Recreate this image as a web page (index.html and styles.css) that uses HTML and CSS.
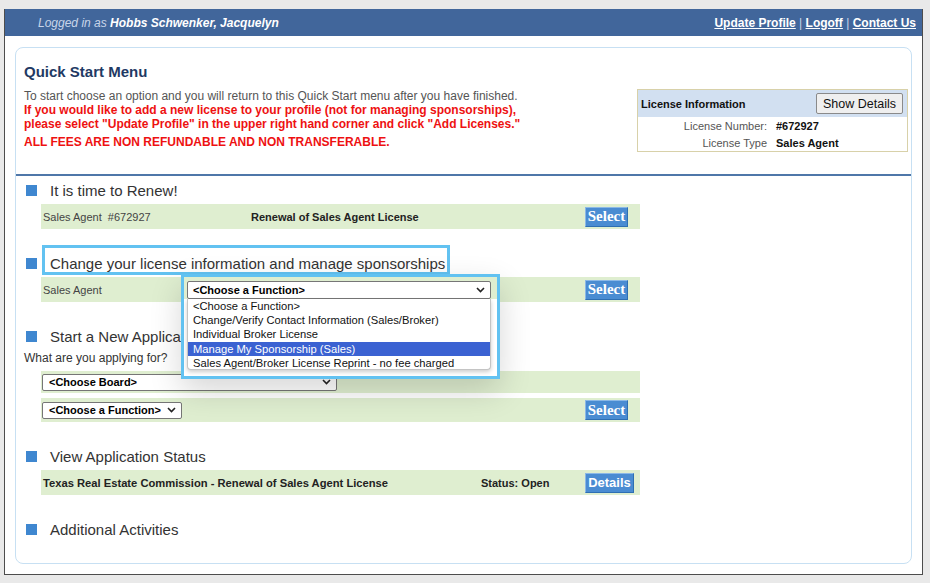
FILE: index.html
```html
<!DOCTYPE html>
<html>
<head>
<meta charset="utf-8">
<link rel="stylesheet" href="styles.css">
</head>
<body>
<div class="frame">
  <div class="topbar">
    <div class="who"><span>Logged in as </span><b>Hobbs Schwenker, Jacquelyn</b></div>
    <div class="links"><a>Update Profile</a> | <a>Logoff</a> | <a>Contact Us</a></div>
  </div>
  <div class="card">
    <div class="qs-head">
      <div class="intro">
        <h1>Quick Start Menu</h1>
        <p class="desc">To start choose an option and you will return to this Quick Start menu after you have finished.<br><span class="red">If you would like to add a new license to your profile (not for managing sponsorships),<br>please select "Update Profile" in the upper right hand corner and click "Add Licenses."</span></p>
        <p class="fees">ALL FEES ARE NON REFUNDABLE AND NON TRANSFERABLE.</p>
      </div>
      <div class="licbox">
        <div class="lic-h"><span>License Information</span><button class="btn-gray">Show Details</button></div>
        <div class="lic-r"><span class="k">License Number:</span><span class="v">#672927</span></div>
        <div class="lic-r"><span class="k">License Type</span><span class="v">Sales Agent</span></div>
      </div>
    </div>

    <div class="sections">
      <div class="sec">
        <div class="sec-t"><span class="sq"></span>It is time to Renew!</div>
        <div class="row">
          <span class="c1 w208">Sales Agent &nbsp;#672927</span>
          <span class="b">Renewal of Sales Agent License</span>
          <span class="act"><button class="btn-blue">Select</button></span>
        </div>
      </div>

      <div class="sec">
        <div class="sec-t"><span class="sq"></span>Change your license information and manage sponsorships</div>
        <div class="row">
          <span class="c1 w144">Sales Agent</span>
          <div class="sel w304"><span>&lt;Choose a Function&gt;</span><svg width="9" height="6" viewBox="0 0 9 6"><path d="M1 1 L4.5 4.5 L8 1" fill="none" stroke="#222" stroke-width="1.6"/></svg></div>
          <span class="act"><button class="btn-blue">Select</button></span>
        </div>
      </div>

      <div class="sec">
        <div class="sec-t"><span class="sq"></span>Start a New Application</div>
        <p class="ask">What are you applying for?</p>
        <div class="row short">
          <div class="sel w295"><span>&lt;Choose Board&gt;</span><svg width="9" height="6" viewBox="0 0 9 6"><path d="M1 1 L4.5 4.5 L8 1" fill="none" stroke="#222" stroke-width="1.6"/></svg></div>
        </div>
        <div class="row mid">
          <div class="sel w140"><span>&lt;Choose a Function&gt;</span><svg width="9" height="6" viewBox="0 0 9 6"><path d="M1 1 L4.5 4.5 L8 1" fill="none" stroke="#222" stroke-width="1.6"/></svg></div>
          <span class="act"><button class="btn-blue">Select</button></span>
        </div>
      </div>

      <div class="sec">
        <div class="sec-t"><span class="sq"></span>View Application Status</div>
        <div class="row">
          <span class="b wide">Texas Real Estate Commission - Renewal of Sales Agent License</span>
          <span class="b status">Status: Open</span>
          <span class="act fixed"><button class="btn-blue sans">Details</button></span>
        </div>
      </div>

      <div class="sec">
        <div class="sec-t"><span class="sq"></span>Additional Activities</div>
      </div>

      <div class="hl-title"></div>
      <div class="hl-dd">
        <div class="dd-panel">
          <div class="dd-list">
            <div class="opt">&lt;Choose a Function&gt;</div>
            <div class="opt">Change/Verify Contact Information (Sales/Broker)</div>
            <div class="opt">Individual Broker License</div>
            <div class="opt on">Manage My Sponsorship (Sales)</div>
            <div class="opt">Sales Agent/Broker License Reprint - no fee charged</div>
          </div>
        </div>
      </div>
    </div>
  </div>
</div>
</body>
</html>
```

FILE: styles.css
```css
body {
  margin: 0;
  background: #e9e9e9;
  font-family: "Liberation Sans", Arial, sans-serif;
}

.frame {
  margin: 9px 0 0 4px;
  width: 917px;
  height: 565px;
  background: #fff;
  border: 1px solid #4d4d4d;
  border-top: 0;
}

.topbar {
  height: 27px;
  background: #41669b;
  display: flex;
  align-items: center;
  justify-content: space-between;
  padding: 0 6px 0 33px;
  font-size: 12px;
}

.who {
  color: #c8d5e9;
  font-style: italic;
}

.who b {
  color: #fff;
}

.links {
  color: #c8d5e9;
}

.links a {
  color: #fff;
  font-weight: bold;
  text-decoration: underline;
}

.card {
  margin: 11px 10px 10px;
  height: 517px;
  box-sizing: border-box;
  border: 1px solid #c7e0f3;
  border-radius: 8px;
}

.qs-head {
  height: 128px;
  box-sizing: border-box;
  border-bottom: 2px solid #4f77a9;
  display: flex;
  justify-content: space-between;
  padding: 15px 3px 0 8px;
}

h1 {
  margin: 0;
  font-size: 15px;
  line-height: 18px;
  color: #1f3a64;
}

.desc {
  margin: 8px 0 0;
  font-size: 12px;
  line-height: 14px;
  color: #555;
}

.red {
  color: #ee1111;
  font-weight: bold;
}

.fees {
  margin: 4px 0 0;
  font-size: 12px;
  line-height: 14px;
  color: #ee1111;
  font-weight: bold;
}

.licbox {
  margin-top: 26px;
  width: 271px;
  height: 63px;
  box-sizing: border-box;
  border: 1px solid #d8d1a9;
  font-size: 11px;
}

.lic-h {
  height: 27px;
  background: #d2e0f1;
  display: flex;
  align-items: center;
  justify-content: space-between;
  padding: 0 4px 0 3px;
  font-weight: bold;
  color: #111;
}

.btn-gray {
  height: 21px;
  width: 87px;
  padding: 0;
  font-family: "Liberation Sans", Arial, sans-serif;
  font-size: 12.5px;
  color: #111;
  background: #efefef;
  border: 1px solid #8a8a8a;
  border-radius: 2px;
}

.lic-r {
  display: flex;
  align-items: center;
  height: 17px;
}

.k {
  width: 129px;
  text-align: right;
  color: #555;
}

.v {
  margin-left: 9px;
  font-weight: bold;
  color: #111;
}

.sections {
  position: relative;
  padding: 3px 0 0 10px;
}

.sec {
  margin-bottom: 23px;
}

.sec-t {
  display: flex;
  align-items: center;
  height: 22px;
  margin-bottom: 3px;
  font-size: 15px;
  color: #333;
}

.sq {
  width: 11px;
  height: 11px;
  background: #3f87d0;
  margin-right: 13px;
}

.ask {
  margin: 4px 0 0 -2px;
  font-size: 12px;
  line-height: 14px;
  color: #333;
}

.row {
  margin-left: 15px;
  width: 599px;
  height: 25px;
  box-sizing: border-box;
  background: #dfeed0;
  display: flex;
  align-items: center;
  padding-left: 2px;
  font-size: 11px;
  color: #333;
}

.row.short {
  height: 22px;
  margin-top: 6px;
  padding-left: 1px;
}

.row.mid {
  height: 24px;
  margin-top: 5px;
  padding-left: 1px;
}

.c1 {
  color: #444;
  flex-shrink: 0;
}

.w208 { width: 208px; }
.w144 { width: 144px; }

.b {
  font-weight: bold;
  color: #222;
}

.wide {
  font-size: 11.2px;
}

.status {
  margin-left: auto;
  width: 104px;
}

.act {
  width: 55px;
  margin-left: auto;
  flex-shrink: 0;
  display: flex;
}

.act.fixed {
  margin-left: 0;
}

.btn-blue {
  height: 20px;
  width: 43px;
  padding: 0;
  background: #4a8cd2;
  color: #fff;
  font-family: "Liberation Serif", "Times New Roman", serif;
  font-weight: bold;
  font-size: 15px;
  border: 1px solid;
  border-color: #8bb8e6 #2f6fb2 #2f6fb2 #8bb8e6;
}

.btn-blue.sans {
  width: 49px;
  font-family: "Liberation Sans", Arial, sans-serif;
  font-size: 13px;
}

.sel {
  display: flex;
  align-items: center;
  justify-content: space-between;
  box-sizing: border-box;
  height: 17px;
  background: #fff;
  border: 1px solid #767676;
  border-radius: 2px;
  padding: 0 5px 0 6px;
  font-size: 11px;
  font-weight: bold;
  color: #000;
  flex-shrink: 0;
}

.w304 { width: 304px; height: 18px; padding-left: 5px; }
.w295 { width: 295px; }
.w140 { width: 140px; }

.hl-title {
  position: absolute;
  left: 26px;
  top: 69px;
  width: 408px;
  height: 30px;
  box-sizing: border-box;
  border: 3px solid #62c2f1;
}

.hl-dd {
  position: absolute;
  left: 165px;
  top: 98px;
  width: 319px;
  height: 105px;
  box-sizing: border-box;
  border: 3px solid #62c2f1;
  box-shadow: 0 12px 30px rgba(0, 0, 0, 0.16);
}

.dd-panel {
  position: absolute;
  left: 0;
  right: 0;
  top: 22px;
  bottom: 0;
  background: #fff;
}

.dd-list {
  margin-left: 3px;
  width: 304px;
  height: 71px;
  box-sizing: border-box;
  border: 1px solid #c4c4c4;
  border-top: 0;
  border-radius: 0 0 4px 4px;
  box-shadow: 0 2px 4px rgba(0, 0, 0, 0.2);
  background: #fff;
  overflow: hidden;
}

.opt {
  height: 14.2px;
  line-height: 14.2px;
  padding-left: 5px;
  font-size: 11.2px;
  color: #111;
  white-space: nowrap;
}

.opt.on {
  background: #3b62d2;
  color: #fff;
}
```
